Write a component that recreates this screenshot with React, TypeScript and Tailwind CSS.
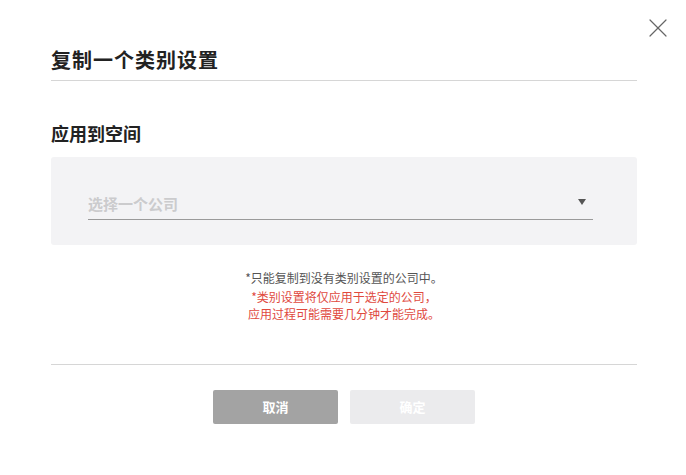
import { X } from "lucide-react";

export default function App() {
  return (
    <div
      className="w-[686px] h-[475px] bg-white relative"
      style={{ fontFamily: '"Noto Sans CJK SC", "Noto Sans", sans-serif' }}
    >
      <button className="absolute top-[12px] right-[12px] text-[#666]">
        <X className="w-[32px] h-[32px]" strokeWidth={0.9} />
      </button>

      <div className="pl-[51px] pr-[49px] pt-[46px]">
        <h1 className="text-[20px] leading-[27px] tracking-[1px] font-bold text-[#222] pb-[7px] border-b border-[#d6d6d6]">
          复制一个类别设置
        </h1>

        <h2 className="mt-[39px] text-[18px] leading-[26px] font-bold text-[#222]">
          应用到空间
        </h2>

        <div className="mt-[11px] h-[88px] bg-[#f3f3f5] rounded-[3px] pl-[37px] pr-[44px] pt-[37px]">
          <div className="flex items-center justify-between border-b border-[#9a9a9a] h-[26px] pb-[4px]">
            <span className="text-[15px] font-bold text-[#cbcbcd]">选择一个公司</span>
            <svg width="8" height="6" viewBox="0 0 8 6" className="mr-[7px] mb-[6px]">
              <path d="M0 0 H8 L4 6 Z" fill="#555" />
            </svg>
          </div>
        </div>

        <div className="mt-[24px] text-center text-[12px] leading-[17px]">
          <p className="text-[#555]">*只能复制到没有类别设置的公司中。</p>
          <p className="mt-[2px] text-[#e0493e]">*类别设置将仅应用于选定的公司，</p>
          <p className="text-[#e0493e]">应用过程可能需要几分钟才能完成。</p>
        </div>

        <div className="mt-[42px] border-t border-[#d6d6d6]" />

        <div className="mt-[25px] flex justify-center gap-[12px]">
          <button className="w-[125px] h-[34px] bg-[#a3a3a3] text-white text-[13px] font-bold rounded-[2px]">
            取消
          </button>
          <button className="w-[125px] h-[34px] bg-[#ebebed] text-white text-[13px] font-bold rounded-[2px]">
            确定
          </button>
        </div>
      </div>
    </div>
  );
}
